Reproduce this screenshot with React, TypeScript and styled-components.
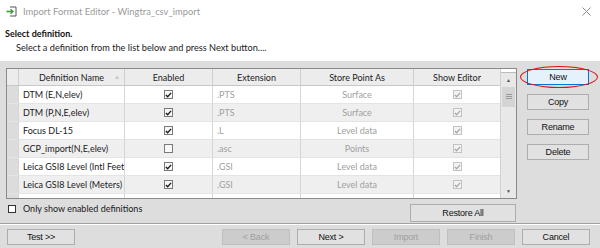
import styled, { createGlobalStyle } from 'styled-components';

const GlobalStyle = createGlobalStyle`
  html, body {
    margin: 0;
    padding: 0;
    background: #ffffff;
  }
  body {
    font-family: Lato, 'Noto Sans', sans-serif;
    color: #1a1a1a;
  }
`;

type Row = {
  name: string;
  enabled: boolean;
  ext: string;
  store: string;
};

const rows: Row[] = [
  { name: 'DTM (E,N,elev)', enabled: true, ext: '.PTS', store: 'Surface' },
  { name: 'DTM (P,N,E,elev)', enabled: true, ext: '.PTS', store: 'Surface' },
  { name: 'Focus DL-15', enabled: true, ext: '.L', store: 'Level data' },
  { name: 'GCP_import(N,E,elev)', enabled: false, ext: '.asc', store: 'Points' },
  { name: 'Leica GSI8 Level (Intl Feet)', enabled: true, ext: '.GSI', store: 'Level data' },
  { name: 'Leica GSI8 Level (Meters)', enabled: true, ext: '.GSI', store: 'Level data' },
  { name: 'Leica GSI8 Level (US Feet)', enabled: true, ext: '.GSI', store: 'Level data' },
];

const COLS = '12px 106px 88px 88px 113px 86px';

const Check = ({ checked, disabled }: { checked: boolean; disabled?: boolean }) => (
  <S.CheckBox $disabled={disabled}>
    {checked && (
      <svg width="8" height="8" viewBox="0 0 8 8">
        <path
          d="M1 4 L3 6 L7 1.5"
          fill="none"
          stroke={disabled ? '#a8a8a8' : '#1a1a1a'}
          strokeWidth="1.5"
        />
      </svg>
    )}
  </S.CheckBox>
);

const App = () => {
  return (
    <>
      <GlobalStyle />
      <S.Window>
        <S.TitleBar>
          <S.TitleLeft>
            <svg width="11" height="11" viewBox="0 0 11 11">
              <path d="M4 1 H10 V10 H4" fill="none" stroke="#555" strokeWidth="1" />
              <path d="M0.5 5.5 H6.5" stroke="#3a9a3a" strokeWidth="1.6" />
              <path d="M4.5 3.3 L7 5.5 L4.5 7.7" fill="none" stroke="#3a9a3a" strokeWidth="1.4" />
            </svg>
            <S.TitleText>Import Format Editor - Wingtra_csv_import</S.TitleText>
          </S.TitleLeft>
          <svg width="9" height="9" viewBox="0 0 9 9">
            <path d="M0.5 0.5 L8.5 8.5 M8.5 0.5 L0.5 8.5" stroke="#8a8a8a" strokeWidth="1" />
          </svg>
        </S.TitleBar>

        <S.Intro>
          <S.Heading>Select definition.</S.Heading>
          <S.SubHeading>Select a definition from the list below and press Next button....</S.SubHeading>
        </S.Intro>

        <S.Body>
          <S.MainRow>
            <S.TableFrame>
              <S.Grid>
                <S.HeaderRow>
                  <S.HeadCell />
                  <S.HeadCell>
                    Definition Name
                    <S.SortMark>&#9650;</S.SortMark>
                  </S.HeadCell>
                  <S.HeadCell>Enabled</S.HeadCell>
                  <S.HeadCell>Extension</S.HeadCell>
                  <S.HeadCell>Store Point As</S.HeadCell>
                  <S.HeadCell>Show Editor</S.HeadCell>
                </S.HeaderRow>
                <S.Rows>
                  {rows.map((r, i) => (
                    <S.DataRow key={r.name} $alt={i % 2 === 1}>
                      <S.RowHead />
                      <S.NameCell>{r.name}</S.NameCell>
                      <S.CenterCell>
                        <Check checked={r.enabled} />
                      </S.CenterCell>
                      <S.ExtCell>{r.ext}</S.ExtCell>
                      <S.StoreCell>{r.store}</S.StoreCell>
                      <S.CenterCell>
                        <Check checked disabled />
                      </S.CenterCell>
                    </S.DataRow>
                  ))}
                </S.Rows>
              </S.Grid>
              <S.ScrollBar>
                <S.ScrollCorner />
                <S.ScrollArrow>&#9650;</S.ScrollArrow>
                <S.Thumb>
                  <S.Grip />
                </S.Thumb>
                <S.Track />
                <S.ScrollArrow>&#9660;</S.ScrollArrow>
              </S.ScrollBar>
            </S.TableFrame>

            <S.SideButtons>
              <S.Highlight>
                <S.Button $focused>New</S.Button>
                <S.RedRing />
              </S.Highlight>
              <S.Button>Copy</S.Button>
              <S.Button>Rename</S.Button>
              <S.Button>Delete</S.Button>
            </S.SideButtons>
          </S.MainRow>

          <S.OptionsRow>
            <S.OptionLabel>
              <S.PlainBox />
              Only show enabled definitions
            </S.OptionLabel>
            <S.RestoreButton>Restore All</S.RestoreButton>
          </S.OptionsRow>

          <S.Separator />

          <S.Footer>
            <S.Button>Test &gt;&gt;</S.Button>
            <S.FooterRight>
              <S.Button $disabled>&lt; Back</S.Button>
              <S.Button>Next &gt;</S.Button>
              <S.Button $disabled>Import</S.Button>
              <S.Button $disabled>Finish</S.Button>
              <S.Button>Cancel</S.Button>
            </S.FooterRight>
          </S.Footer>
        </S.Body>
      </S.Window>
    </>
  );
};

const S = {
  Window: styled.div`
    width: 600px;
    height: 248px;
    display: flex;
    flex-direction: column;
    overflow: hidden;
    background: #ffffff;
    & > * {
      flex-shrink: 0;
    }
  `,
  TitleBar: styled.div`
    height: 22px;
    display: flex;
    align-items: center;
    justify-content: space-between;
    padding: 1px 9px 0 6px;
    box-sizing: border-box;
  `,
  TitleLeft: styled.div`
    display: flex;
    align-items: center;
    gap: 6px;
  `,
  TitleText: styled.span`
    font-size: 9.4px;
    color: #9a9a9a;
  `,
  Intro: styled.div`
    height: 39px;
    padding: 5px 0 0 5px;
    box-sizing: border-box;
  `,
  Heading: styled.div`
    font-size: 9px;
    font-weight: 700;
    color: #111;
    line-height: 14px;
  `,
  SubHeading: styled.div`
    font-size: 9.2px;
    color: #222;
    line-height: 14px;
    padding-left: 11px;
  `,
  Body: styled.div`
    flex: 1;
    background: #dddddd;
    display: flex;
    flex-direction: column;
    padding: 7px 0 0 6px;
    box-sizing: border-box;
  `,
  MainRow: styled.div`
    display: flex;
    align-items: flex-start;
    gap: 10px;
  `,
  TableFrame: styled.div`
    width: 511px;
    height: 131px;
    box-sizing: border-box;
    border: 1px solid #8a8a8a;
    background: #ffffff;
    display: flex;
    overflow: hidden;
  `,
  Grid: styled.div`
    flex: 1;
    display: flex;
    flex-direction: column;
    overflow: hidden;
  `,
  HeaderRow: styled.div`
    flex-shrink: 0;
    display: grid;
    grid-template-columns: ${COLS};
    height: 16px;
    background: #ececec;
    border-bottom: 1px solid #c8c8c8;
  `,
  HeadCell: styled.div`
    position: relative;
    display: flex;
    align-items: center;
    justify-content: center;
    font-size: 9px;
    color: #222;
    border-right: 1px solid #cfcfcf;
    &:last-child {
      border-right: none;
    }
  `,
  SortMark: styled.span`
    position: absolute;
    right: 4px;
    top: 4px;
    font-size: 6px;
    color: #c4c4c4;
  `,
  Rows: styled.div`
    flex-shrink: 0;
    display: flex;
    flex-direction: column;
  `,
  DataRow: styled.div<{ $alt: boolean }>`
    flex-shrink: 0;
    display: grid;
    grid-template-columns: ${COLS};
    height: 18px;
    background: ${(p) => (p.$alt ? '#efefef' : '#ffffff')};
    & > div {
      border-right: 1px solid #d6d6d6;
      border-bottom: 1px solid #e4e4e4;
      box-sizing: border-box;
    }
    & > div:last-child {
      border-right: none;
    }
  `,
  RowHead: styled.div`
    background: #dcdcdc;
  `,
  NameCell: styled.div`
    display: flex;
    align-items: center;
    padding-left: 4px;
    font-size: 9px;
    color: #1a1a1a;
    white-space: nowrap;
    overflow: hidden;
  `,
  CenterCell: styled.div`
    display: flex;
    align-items: center;
    justify-content: center;
  `,
  ExtCell: styled.div`
    display: flex;
    align-items: center;
    padding-left: 4px;
    font-size: 9px;
    color: #a0a0a0;
  `,
  StoreCell: styled.div`
    display: flex;
    align-items: center;
    justify-content: center;
    font-size: 9px;
    color: #a0a0a0;
  `,
  CheckBox: styled.span<{ $disabled?: boolean }>`
    width: 9px;
    height: 9px;
    box-sizing: border-box;
    border: 1px solid ${(p) => (p.$disabled ? '#c2c2c2' : '#7a7a7a')};
    background: ${(p) => (p.$disabled ? '#f3f3f3' : '#f8f8f8')};
    display: flex;
    align-items: center;
    justify-content: center;
  `,
  ScrollBar: styled.div`
    width: 15px;
    display: flex;
    flex-direction: column;
    background: #e8e8e8;
    border-left: 1px solid #d0d0d0;
  `,
  ScrollCorner: styled.div`
    height: 3px;
    background: #ffffff;
    border-bottom: 1px solid #bdbdbd;
  `,
  ScrollArrow: styled.div`
    height: 14px;
    display: flex;
    align-items: center;
    justify-content: center;
    font-size: 5px;
    color: #505050;
  `,
  Thumb: styled.div`
    height: 20px;
    margin: 0 1px;
    background: #d4d4d4;
    display: flex;
    align-items: center;
    justify-content: center;
  `,
  Grip: styled.div`
    width: 6px;
    height: 6px;
    background: repeating-linear-gradient(
      to bottom,
      #9a9a9a 0,
      #9a9a9a 1px,
      transparent 1px,
      transparent 2px
    );
  `,
  Track: styled.div`
    flex: 1;
  `,
  SideButtons: styled.div`
    display: flex;
    flex-direction: column;
    gap: 9px;
    padding-top: 1px;
  `,
  Highlight: styled.div`
    position: relative;
  `,
  RedRing: styled.span`
    position: absolute;
    left: -7px;
    top: -3px;
    width: 76px;
    height: 20px;
    border: 1.5px solid #e01010;
    border-radius: 50%;
    pointer-events: none;
  `,
  Button: styled.div<{ $focused?: boolean; $disabled?: boolean }>`
    width: 62px;
    height: 16px;
    box-sizing: border-box;
    display: flex;
    align-items: center;
    justify-content: center;
    font-family: 'Liberation Sans', Arial, sans-serif;
    font-size: 9px;
    letter-spacing: -0.2px;
    color: ${(p) => (p.$disabled ? '#a0a0a0' : '#111')};
    background: ${(p) => (p.$focused ? '#e5f1fb' : p.$disabled ? '#cccccc' : '#e1e1e1')};
    border: 1px solid ${(p) => (p.$focused ? '#0078d7' : p.$disabled ? '#bfbfbf' : '#adadad')};
  `,
  OptionsRow: styled.div`
    display: flex;
    align-items: flex-start;
    justify-content: space-between;
    width: 510px;
    margin-top: 5px;
  `,
  OptionLabel: styled.label`
    display: flex;
    align-items: center;
    gap: 7px;
    padding-left: 2px;
    margin-top: -1px;
    font-size: 9px;
    color: #1a1a1a;
  `,
  PlainBox: styled.span`
    width: 8px;
    height: 8px;
    box-sizing: border-box;
    border: 1px solid #333;
    background: #fff;
  `,
  RestoreButton: styled.div`
    width: 106px;
    height: 18px;
    box-sizing: border-box;
    display: flex;
    align-items: center;
    justify-content: center;
    font-family: 'Liberation Sans', Arial, sans-serif;
    font-size: 9px;
    letter-spacing: -0.2px;
    background: #e1e1e1;
    border: 1px solid #adadad;
    color: #111;
  `,
  Separator: styled.div`
    margin: 1px 0 0 -6px;
    height: 1px;
    background: #a0a0a0;
    border-bottom: 1px solid #ffffff;
  `,
  Footer: styled.div`
    display: flex;
    align-items: center;
    justify-content: space-between;
    padding: 4px 10px 0 1px;
    & > div:first-child {
      width: 68px;
    }
  `,
  FooterRight: styled.div`
    display: flex;
    gap: 7px;
    & > div {
      width: 68px;
    }
  `,
};

export default App;
